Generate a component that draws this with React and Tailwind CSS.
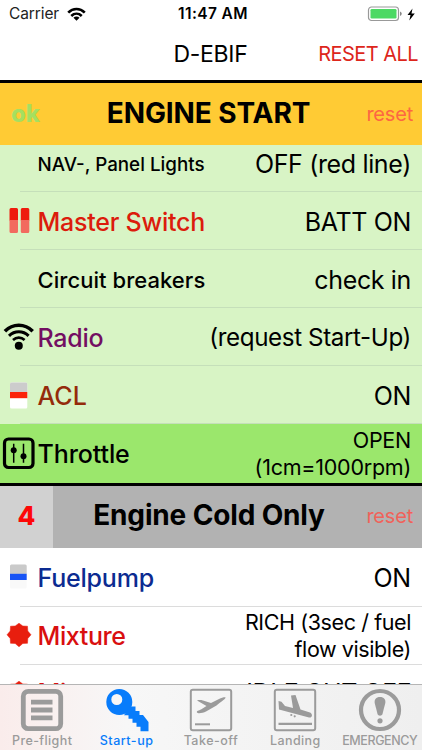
import clsx from "clsx";

const startItems = [
  { label: "NAV-, Panel Lights", labelClass: "text-[18.8px] text-black pt-[6px]", value: "OFF (red line)" },
  { label: "Master Switch", labelClass: "text-[25px] tracking-[-0.25px] text-[#dc1c0c] pt-1", value: "BATT ON", icon: "master" },
  { label: "Circuit breakers", labelClass: "text-[22px] tracking-[0.05px] text-black pt-1", value: "check in" },
  {
    label: "Radio",
    labelClass: "text-[25px] tracking-[-0.25px] text-[#730e62] pt-1",
    value: "(request Start-Up)",
    valueClass: "text-[24.2px] tracking-[-0.4px] pt-1",
    icon: "radio",
  },
  { label: "ACL", labelClass: "text-[25px] text-[#942b0b] pt-1", value: "ON", icon: "acl" },
  {
    label: "Throttle",
    labelClass: "text-[25px] tracking-[-0.1px] text-black pt-1",
    value: "OPEN\n(1cm=1000rpm)",
    valueClass: "text-[21.5px] leading-[26.5px] tracking-[-0.25px] pt-0.5",
    icon: "throttle",
    active: true,
  },
];

const coldItems = [
  {
    label: "Fuelpump",
    labelClass: "text-[25px] tracking-[-0.2px] text-[#0c2b91] pt-0.5",
    value: "ON",
    valueClass: "text-[25px] tracking-[-0.2px] pt-0.5",
    icon: "fuel",
  },
  {
    label: "Mixture",
    labelClass: "text-[25px] tracking-[-0.4px] text-[#d90f0f] pt-0.5",
    value: "RICH (3sec / fuel\nflow visible)",
    valueClass: "text-[21.5px] leading-[26.5px] tracking-[-0.4px]",
    icon: "mixture",
  },
  {
    label: "Mixture",
    labelClass: "text-[25px] tracking-[-0.4px] text-[#d90f0f]",
    value: "IDLE CUT OFF",
    valueClass: "text-[25px] tracking-[-0.4px]",
    icon: "mixture",
  },
];

const tabs = [
  { label: "Pre-flight", icon: "list", labelClass: "tracking-[0.4px]" },
  { label: "Start-up", icon: "key", labelClass: "tracking-[0.5px]", active: true },
  { label: "Take-off", icon: "takeoff", labelClass: "tracking-[0.5px]" },
  { label: "Landing", icon: "landing", labelClass: "tracking-[0.4px]" },
  { label: "EMERGENCY", icon: "emergency", labelClass: "tracking-[-0.4px]" },
];

function RowIcon({ name }) {
  switch (name) {
    case "master":
      return (
        <svg width="38" height="34" viewBox="0 0 38 34">
          <path d="M9.5 5.500q0-1.500 1.500-1.500h5.500q1.500 0 1.500 1.500v11H9.500zM20.800 5.500q0-1.500 1.500-1.500h5.500q1.500 0 1.500 1.500v11h-8.500z" fill="#ee1c0e" />
          <path d="M9.500 16h8.500v11.500q0 1.500-1.500 1.500H11q-1.500 0-1.500-1.500zM20.800 16h8.500v11.500q0 1.500-1.500 1.500h-5.500q-1.500 0-1.500-1.500z" fill="#f26a5f" />
        </svg>
      );
    case "radio":
      return (
        <svg width="38" height="34" viewBox="0 0 38 34" fill="none" stroke="#000" strokeWidth="3.600">
          <path d="M4.900 11.300c8-8 19.800-8 27.800 0" />
          <path d="M9 15.800c5.600-5.300 14-5.300 19.600 0" strokeWidth="3" />
          <path d="M13 19.900c3.400-3 8.200-3 11.600 0" strokeWidth="2.700" />
          <circle cx="18.800" cy="25.800" r="4" fill="#000" stroke="none" />
        </svg>
      );
    case "acl":
      return (
        <svg width="38" height="34" viewBox="0 0 38 34">
          <rect x="10" y="4.500" width="17.300" height="26" rx="1.500" fill="#fff" />
          <path d="M10 14V6q0-1.500 1.500-1.500h14.300q1.500 0 1.500 1.500v8z" fill="#cccccc" />
          <path d="M10 14h17.300v6.200H10z" fill="#fb230b" />
        </svg>
      );
    case "throttle":
      return (
        <svg width="38" height="34" viewBox="0 0 38 34">
          <rect x="4.500" y="3" width="28.500" height="28.500" rx="4" fill="none" stroke="#000" strokeWidth="3.200" />
          <path d="M13.700 7.800v19M23.500 7.800v19" stroke="#000" strokeWidth="1.500" />
          <circle cx="13.700" cy="14.300" r="3" />
          <circle cx="23.500" cy="20.300" r="3" />
        </svg>
      );
    case "fuel":
      return (
        <svg width="38" height="34" viewBox="0 0 38 34">
          <rect x="10" y="3.500" width="16.700" height="24" rx="1.500" fill="#f9f9f9" />
          <path d="M10 13V5q0-1.500 1.500-1.500h13.700q1.500 0 1.500 1.500v8z" fill="#cacaca" />
          <path d="M10 12.800h16.700V19H10z" fill="#1854f5" />
        </svg>
      );
    case "mixture":
      return (
        <svg width="38" height="34" viewBox="0 0 38 34">
          <path
            d="M19 4.200L22.800 7l4.700.200.300 4.800 3.200 3.800-3.200 3.700-.300 4.800-4.700.200L19 27.800l-3.800-3.300-4.700-.200-.300-4.800L7 15.800l3.200-3.800.300-4.800 4.700-.200z"
            fill="#e81e0e"
            stroke="#e81e0e"
            strokeWidth="0.500"
            strokeLinejoin="round"
          />
        </svg>
      );
    default:
      return null;
  }
}

function TabIcon({ name }) {
  switch (name) {
    case "list":
      return (
        <svg width="44" height="44" viewBox="0 0 44 44" fill="none" stroke="currentColor">
          <rect x="3.300" y="3.300" width="37.400" height="37.400" rx="5" strokeWidth="4.800" />
          <path d="M11 14.200h21.500M11 22h21.500M11 29.800h21.500" strokeWidth="4.800" />
        </svg>
      );
    case "key":
      return (
        <svg width="44" height="44" viewBox="0 0 44 44" fill="currentColor">
          <path
            fillRule="evenodd"
            d="M14.300 1a13 13 0 1 1 0 26a13 13 0 1 1 0-26zM11.800 6a5.500 5.500 0 1 0 0 11 5.500 5.500 0 1 0 0-11z"
          />
          <path d="M25 18.500h5.500v4.500h4v4h3.500l5.500 7v9.300h-8v-4.500h-4v-4h-4v-4h-4v-3.500h-4.500z" />
        </svg>
      );
    case "takeoff":
      return (
        <svg width="44" height="44" viewBox="0 0 44 44" fill="currentColor">
          <rect x="1.800" y="1.800" width="40.400" height="40.400" rx="2" fill="none" stroke="currentColor" strokeWidth="2" />
          <path d="M8 12.500c2-.700 4-.500 6 0l8 2.500 8-4c3-1.500 7-2.300 6.500-1.200-.500 1.700-5 4.200-9 7.700L17 23.500c-3 1.500-8 2.500-9 1-.800-1.700 2-2 4-3l5.500-3.500z" />
          <path d="M6 35.300h15v2H6z" />
        </svg>
      );
    case "landing":
      return (
        <svg width="44" height="44" viewBox="0 0 44 44" fill="currentColor">
          <rect x="1.800" y="1.800" width="40.400" height="40.400" rx="2" fill="none" stroke="currentColor" strokeWidth="2" />
          <path d="M5.500 13l3 .700 3.500 4.300 8 2L18 7.500l4.500-.500 5 14.500L37 24.500c3 1.500 2.500 5.500-1 5L6 21.500z" />
          <circle cx="18.300" cy="27" r="1.100" />
          <circle cx="21.700" cy="28.300" r="1.100" />
          <path d="M5.500 34.800h33.500V37H5.500z" />
        </svg>
      );
    case "emergency":
      return (
        <svg width="44" height="44" viewBox="0 0 44 44" fill="currentColor">
          <circle cx="22" cy="22" r="19" fill="none" stroke="currentColor" strokeWidth="4.200" />
          <path d="M22 9c-4 0-5.800 2.500-5.300 6l2.800 11c.7 2.200 4.300 2.200 5 0l2.800-11c.5-3.500-1.300-6-5.300-6z" />
          <circle cx="22" cy="32.800" r="2.600" />
        </svg>
      );
    default:
      return null;
  }
}

function ChecklistRow({ item, green }) {
  return (
    <div className={clsx("flex h-[58px] shrink-0", item.active ? "bg-[#9be76c]" : green ? "bg-[#d8f4c5]" : "bg-white")}>
      <div className="flex w-[38px] shrink-0 items-center">
        <RowIcon name={item.icon} />
      </div>
      <div
        className={clsx(
          "-ml-[18px] flex flex-1 items-center justify-between border-b pl-[17.500px] pr-[11px]",
          item.active ? "border-transparent" : green ? "border-[#c5dfba]" : "border-[#dcdcdc]"
        )}
      >
        <span className={clsx("whitespace-nowrap font-medium", item.labelClass)}>{item.label}</span>
        <span
          className={clsx(
            "whitespace-pre text-right text-black",
            item.valueClass || "text-[25px] tracking-[-0.35px] pt-1"
          )}
        >
          {item.value}
        </span>
      </div>
    </div>
  );
}

function StatusBar() {
  return (
    <div className="grid h-7 shrink-0 grid-cols-3 items-center pl-[9px] pr-[7px] text-[15.500px]">
      <div className="flex items-center gap-2">
        <span className="tracking-[-0.1px] text-[#222]">Carrier</span>
        <svg width="19" height="15" viewBox="0 0 20 15" fill="none" stroke="#000" strokeWidth="2.800">
          <path d="M1.300 5.500c5-5 12.400-5 17.400 0M4.500 9c3.200-3 7.800-3 11 0" />
          <path d="M10 14l-3.200-3.200c1.800-1.600 4.600-1.600 6.400 0z" fill="#000" stroke="none" />
        </svg>
      </div>
      <span className="pl-0.5 text-center font-semibold tracking-[0.4px]">11:47 AM</span>
      <div className="flex items-center justify-end gap-1">
        <svg width="36" height="16" viewBox="0 0 36 16">
          <rect x="1.500" y="1" width="30" height="13.500" rx="3" fill="#fff" stroke="#999" strokeWidth="1.200" />
          <rect x="3.500" y="3" width="26" height="9.500" rx="1.300" fill="#4cd964" />
          <path d="M33 5.500q1.800.8 1.800 2.300T33 10z" fill="#888" />
        </svg>
        <svg width="8" height="13" viewBox="0 0 8 13">
          <path d="M5.500.500L.500 7h3L2.300 12.500 7.800 5.500H4.500z" />
        </svg>
      </div>
    </div>
  );
}

export default function App() {
  return (
    <div className="relative flex h-[750px] w-[422px] flex-col overflow-hidden bg-white font-['Inter','Liberation_Sans',sans-serif] text-black">
      <StatusBar />
      <div className="grid h-[52px] shrink-0 grid-cols-[1fr_auto_1fr] items-center pr-[3px] text-[23px]">
        <span />
        <span className="pl-0.5 tracking-[-0.3px]">D-EBIF</span>
        <span className="pr-px text-right text-[20px] tracking-[-0.55px] text-[#dd261b]">RESET ALL</span>
      </div>

      <div className="flex h-[65px] shrink-0 items-center border-t-3 border-black bg-[#ffcb34] pb-[3px] pl-[11px] pr-[9px]">
        <span className="w-[61px] pt-0.5 text-[24px] font-extrabold text-[#a5df60]">ok</span>
        <span className="flex-1 pr-1 text-center text-[28px] font-bold tracking-[-0.1px]">ENGINE START</span>
        <span className="w-16 pt-0.5 text-right text-[20px] tracking-[-0.2px] text-[#fd6742]">reset</span>
      </div>

      {/* the first row is scrolled halfway under the section header */}
      <div className="flex h-[338px] shrink-0 flex-col justify-end overflow-hidden bg-[#9be76c] pb-px">
        {startItems.map((item) => (
          <ChecklistRow key={item.label} item={item} green />
        ))}
      </div>

      <div className="flex h-[65px] shrink-0 items-center border-t-3 border-black bg-[#b2b2b2] pr-[9px]">
        <span className="flex h-full w-[53px] items-center justify-center bg-[#d1d1d1] pb-1 text-[26px] font-extrabold text-[#fd0808]">4</span>
        <span className="flex-1 whitespace-nowrap pb-1 pl-[16px] text-center text-[28px] font-bold tracking-[-0.15px]">Engine Cold Only</span>
        <span className="w-16 pb-0.5 text-right text-[20px] tracking-[-0.2px] text-[#f0625a]">reset</span>
      </div>
      <div className="flex flex-col pt-px">
        {coldItems.map((item, index) => (
          <ChecklistRow key={index} item={item} />
        ))}
      </div>

      <div className="absolute inset-x-0 bottom-0 grid h-[66px] grid-cols-5 border-t border-[#b5b5b5] bg-[#f4f4f4] bg-linear-to-r from-[#faeceb] via-[#f7f7f7] via-30% to-[#efefef]">
        {tabs.map((tab) => (
          <div
            key={tab.label}
            className={clsx("flex flex-col items-center pt-[3px]", tab.active ? "text-[#087cfb]" : "text-[#9b9b9b]")}
          >
            <TabIcon name={tab.icon} />
            <span className={clsx("text-[12.500px] font-medium leading-[17px]", tab.labelClass)}>{tab.label}</span>
          </div>
        ))}
      </div>
    </div>
  );
}
